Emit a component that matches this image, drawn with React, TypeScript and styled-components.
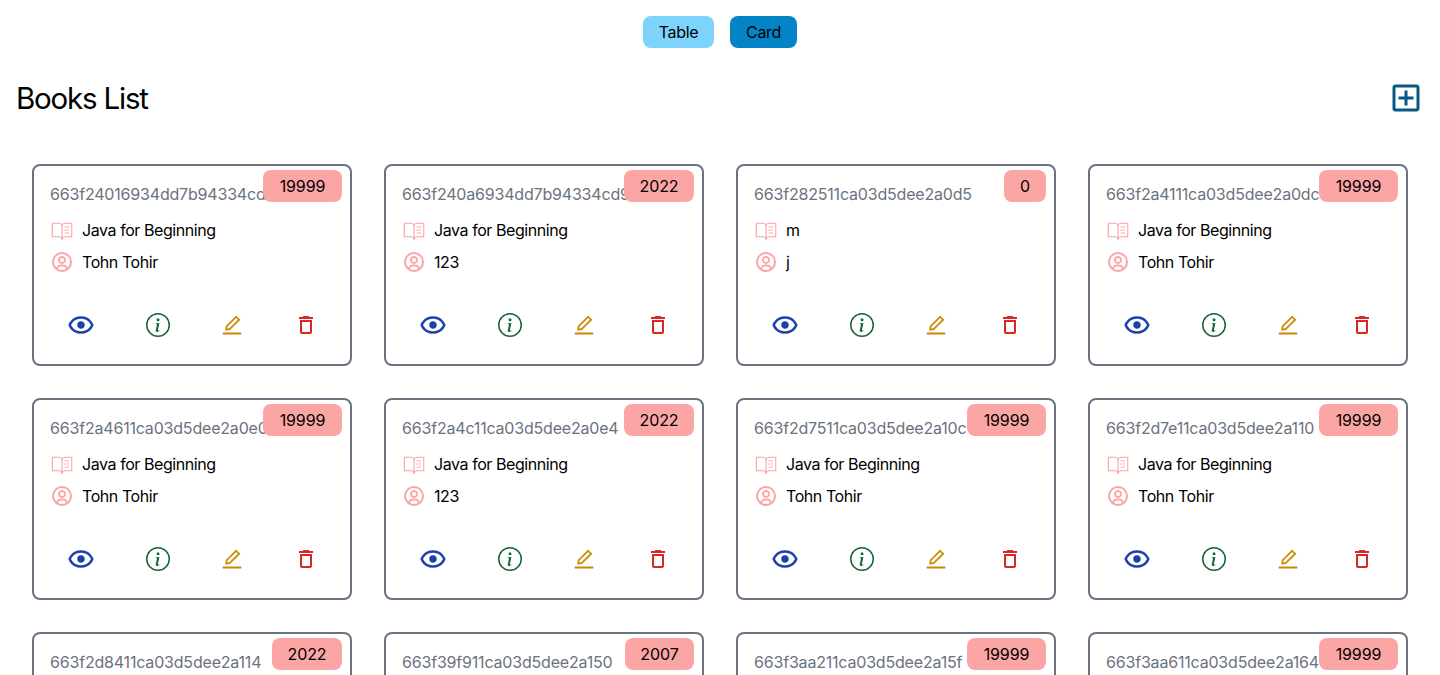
import React from 'react';
import styled, { createGlobalStyle } from 'styled-components';
import { AiOutlineEdit } from 'react-icons/ai';
import { BiShow, BiUserCircle } from 'react-icons/bi';
import { BsInfoCircle } from 'react-icons/bs';
import { MdOutlineAddBox, MdOutlineDelete } from 'react-icons/md';
import { PiBookOpenTextLight } from 'react-icons/pi';

const GlobalStyle = createGlobalStyle`
  *, *::before, *::after { box-sizing: border-box; }
  html, body { margin: 0; height: 100%; overflow: hidden; background: #fff; }
  body {
    color: #000;
    font-family: Inter, "Liberation Sans", sans-serif;
    font-size: 16px;
    line-height: 24px;
  }
  svg { display: block; flex-shrink: 0; }
`;

const Page = styled.main`
  padding: 16px;
`;

const Switcher = styled.nav`
  display: flex;
  justify-content: center;
  gap: 16px;
`;

const ViewButton = styled.button<{ $active?: boolean; $width: number }>`
  width: ${({ $width }) => $width}px;
  height: 32px;
  padding: 0;
  border: 0;
  border-radius: 8px;
  background: ${({ $active }) => ($active ? '#0284c7' : '#7dd3fc')};
  color: inherit;
  font: inherit;
  letter-spacing: -0.35px;
`;

const Header = styled.header`
  display: flex;
  align-items: center;
  justify-content: space-between;
  margin: 32px 0;
`;

const Title = styled.h1`
  margin: 0;
  padding-top: 1px;
  font-size: 29.5px;
  font-weight: 400;
  line-height: 35px;
  letter-spacing: -1.2px;
`;

const AddIcon = styled(MdOutlineAddBox)`
  color: #075985;
  font-size: 36px;
`;

const Grid = styled.section`
  display: grid;
  grid-template-columns: repeat(4, 1fr);
  gap: 32px;
  padding: 16px;
`;

const Card = styled.article`
  position: relative;
  min-width: 0;
  padding: 8px 16px;
  border: 2px solid #6b7280;
  border-radius: 8px;
`;

const Year = styled.h2<{ $width: number }>`
  position: absolute;
  top: 4px;
  right: 8px;
  width: ${({ $width }) => $width}px;
  margin: 0;
  padding: 4px 0;
  border-radius: 8px;
  background: #fca5a5;
  font-size: 16px;
  font-weight: 400;
  line-height: 24px;
  letter-spacing: -0.1px;
  text-align: center;
`;

const BookId = styled.h4`
  margin: 8px 0;
  color: #6b7280;
  font-size: 16px;
  font-weight: 400;
  line-height: 24px;
  letter-spacing: -0.19px;
  white-space: nowrap;
`;

const Detail = styled.div`
  display: flex;
  align-items: center;
  gap: 8px;
  height: 32px;
  letter-spacing: -0.43px;

  svg { color: #fca5a5; font-size: 24px; }
`;

const Actions = styled.div`
  display: flex;
  align-items: center;
  justify-content: space-between;
  margin-top: 16px;
  padding: 16px;
  font-size: 24px;
`;

const ViewIcon = styled(BiShow)`color: #1e40af; font-size: 30px;`;
const InfoIcon = styled(BsInfoCircle)`color: #166534;`;
const EditIcon = styled(AiOutlineEdit)`color: #ca8a04;`;
const DeleteIcon = styled(MdOutlineDelete)`color: #dc2626;`;

interface Book {
  id: string;
  year: string;
  title: string;
  author: string;
}

const java = 'Java for Beginning';
const tohir = 'Tohn Tohir';

const books: Book[] = [
  { id: '663f24016934dd7b94334cd6', year: '19999', title: java, author: tohir },
  { id: '663f240a6934dd7b94334cd9', year: '2022', title: java, author: '123' },
  { id: '663f282511ca03d5dee2a0d5', year: '0', title: 'm', author: 'j' },
  { id: '663f2a4111ca03d5dee2a0dc', year: '19999', title: java, author: tohir },
  { id: '663f2a4611ca03d5dee2a0e0', year: '19999', title: java, author: tohir },
  { id: '663f2a4c11ca03d5dee2a0e4', year: '2022', title: java, author: '123' },
  { id: '663f2d7511ca03d5dee2a10c', year: '19999', title: java, author: tohir },
  { id: '663f2d7e11ca03d5dee2a110', year: '19999', title: java, author: tohir },
  { id: '663f2d8411ca03d5dee2a114', year: '2022', title: java, author: '123' },
  { id: '663f39f911ca03d5dee2a150', year: '2007', title: java, author: tohir },
  { id: '663f3aa211ca03d5dee2a15f', year: '19999', title: java, author: tohir },
  { id: '663f3aa611ca03d5dee2a164', year: '19999', title: java, author: tohir },
];

const badgeWidths: Record<string, number> = { '19999': 79, '2022': 70, '2007': 69, '0': 42 };

function BookCard({ book }: { book: Book }) {
  return (
    <Card>
      <Year $width={badgeWidths[book.year]}>{book.year}</Year>
      <BookId>{book.id}</BookId>
      <Detail><PiBookOpenTextLight /><span>{book.title}</span></Detail>
      <Detail><BiUserCircle /><span>{book.author}</span></Detail>
      <Actions>
        <ViewIcon />
        <InfoIcon />
        <EditIcon />
        <DeleteIcon />
      </Actions>
    </Card>
  );
}

export default function App() {
  return (
    <>
      <GlobalStyle />
      <Page>
        <Switcher>
          <ViewButton $width={71}>Table</ViewButton>
          <ViewButton $width={67} $active>Card</ViewButton>
        </Switcher>
        <Header>
          <Title>Books List</Title>
          <AddIcon />
        </Header>
        <Grid>
          {books.map((book) => <BookCard key={book.id} book={book} />)}
        </Grid>
      </Page>
    </>
  );
}
